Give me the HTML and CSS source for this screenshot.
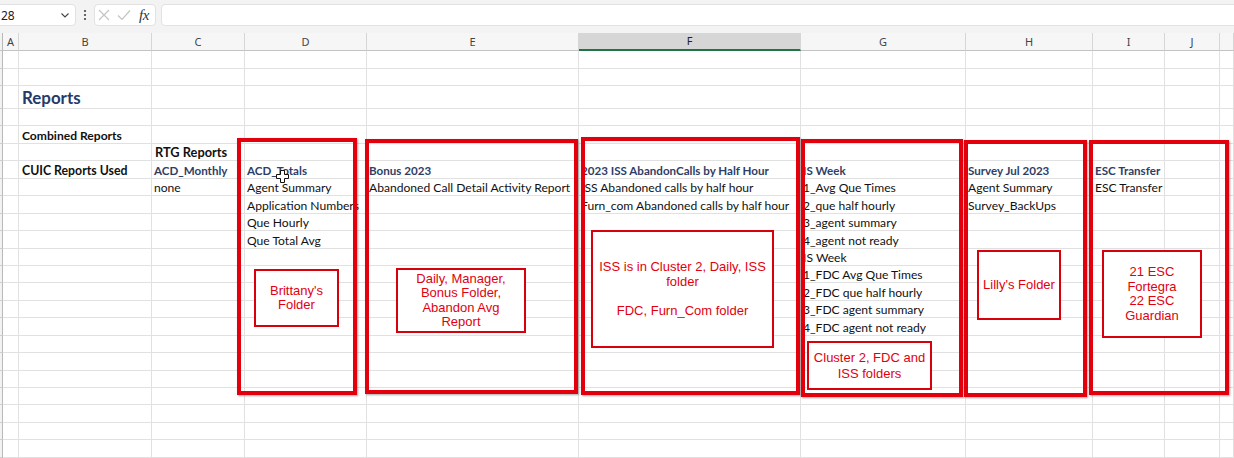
FILE: index.html
```html
<!DOCTYPE html>
<html>
<head>
<meta charset="utf-8">
<link rel="stylesheet" href="styles.css">
</head>
<body>
<div class="app">
  <div class="fbar">
    <div class="namebox"><span>28</span><svg class="chev" width="8" height="5" viewBox="0 0 8 5"><polyline points="0.5,0.5 4,4 7.5,0.5" fill="none" stroke="#444" stroke-width="1.1"/></svg></div>
    <svg class="dots" width="4" height="12" viewBox="0 0 4 12"><circle cx="2" cy="2" r="1.1" fill="#444"/><circle cx="2" cy="6" r="1.1" fill="#444"/><circle cx="2" cy="10" r="1.1" fill="#444"/></svg>
    <div class="fxbox">
      <svg class="ico" width="12" height="12" viewBox="0 0 12 12"><path d="M1 1 L11 11 M11 1 L1 11" stroke="#c4c4c4" stroke-width="1.2" fill="none"/></svg>
      <svg class="ico" width="14" height="12" viewBox="0 0 14 12"><path d="M1 6.5 L5 10.5 L13 1.5" stroke="#c4c4c4" stroke-width="1.2" fill="none"/></svg>
      <span class="fx">fx</span>
    </div>
    <div class="finput"></div>
  </div>
  <div class="sheet">
    <div class="row hdr"><span class="rh"></span><span>A</span><span>B</span><span>C</span><span>D</span><span>E</span><span class="sel">F</span><span>G</span><span>H</span><span>I</span><span>J</span><span></span></div>
    <div class="row top"><span class="rh"></span><span></span><span></span><span></span><span></span><span></span><span></span><span></span><span></span><span></span><span></span><span></span></div>
    <div class="row top"><span class="rh"></span><span></span><span></span><span></span><span></span><span></span><span></span><span></span><span></span><span></span><span></span><span></span></div>
    <div class="row tall"><span class="rh"></span><span></span><span class="title">Reports</span><span></span><span></span><span></span><span></span><span></span><span></span><span></span><span></span><span></span></div>
    <div class="row"><span class="rh"></span><span></span><span></span><span></span><span></span><span></span><span></span><span></span><span></span><span></span><span></span><span></span></div>
    <div class="row"><span class="rh"></span><span></span><span class="bold">Combined Reports</span><span></span><span></span><span></span><span></span><span></span><span></span><span></span><span></span><span></span></div>
    <div class="row"><span class="rh"></span><span></span><span></span><span class="bold lg">RTG Reports</span><span></span><span></span><span></span><span></span><span></span><span></span><span></span><span></span></div>
    <div class="row"><span class="rh"></span><span></span><span class="bold lg2">CUIC Reports Used</span><span class="hd">ACD_Monthly</span><span class="hd">ACD_Totals</span><span class="hd">Bonus 2023</span><span class="hd">2023 ISS AbandonCalls by Half Hour</span><span class="hd">IS Week</span><span class="hd">Survey Jul 2023</span><span class="hd">ESC Transfer</span><span></span><span></span></div>
    <div class="row"><span class="rh"></span><span></span><span></span><span>none</span><span>Agent Summary</span><span>Abandoned Call Detail Activity Report</span><span>ISS Abandoned calls by half hour</span><span>1_Avg Que Times</span><span>Agent Summary</span><span>ESC Transfer</span><span></span><span></span></div>
    <div class="row"><span class="rh"></span><span></span><span></span><span></span><span>Application Numbers</span><span></span><span>Furn_com Abandoned calls by half hour</span><span>2_que half hourly</span><span>Survey_BackUps</span><span></span><span></span><span></span></div>
    <div class="row"><span class="rh"></span><span></span><span></span><span></span><span>Que Hourly</span><span></span><span></span><span>3_agent summary</span><span></span><span></span><span></span><span></span></div>
    <div class="row"><span class="rh"></span><span></span><span></span><span></span><span>Que Total Avg</span><span></span><span></span><span>4_agent not ready</span><span></span><span></span><span></span><span></span></div>
    <div class="row"><span class="rh"></span><span></span><span></span><span></span><span></span><span></span><span></span><span>IS Week</span><span></span><span></span><span></span><span></span></div>
    <div class="row"><span class="rh"></span><span></span><span></span><span></span><span></span><span></span><span></span><span>1_FDC Avg Que Times</span><span></span><span></span><span></span><span></span></div>
    <div class="row"><span class="rh"></span><span></span><span></span><span></span><span></span><span></span><span></span><span>2_FDC que half hourly</span><span></span><span></span><span></span><span></span></div>
    <div class="row"><span class="rh"></span><span></span><span></span><span></span><span></span><span></span><span></span><span>3_FDC agent summary</span><span></span><span></span><span></span><span></span></div>
    <div class="row"><span class="rh"></span><span></span><span></span><span></span><span></span><span></span><span></span><span>4_FDC agent not ready</span><span></span><span></span><span></span><span></span></div>
    <div class="row"><span class="rh"></span><span></span><span></span><span></span><span></span><span></span><span></span><span></span><span></span><span></span><span></span><span></span></div>
    <div class="row"><span class="rh"></span><span></span><span></span><span></span><span></span><span></span><span></span><span></span><span></span><span></span><span></span><span></span></div>
    <div class="row"><span class="rh"></span><span></span><span></span><span></span><span></span><span></span><span></span><span></span><span></span><span></span><span></span><span></span></div>
    <div class="row"><span class="rh"></span><span></span><span></span><span></span><span></span><span></span><span></span><span></span><span></span><span></span><span></span><span></span></div>
    <div class="row"><span class="rh"></span><span></span><span></span><span></span><span></span><span></span><span></span><span></span><span></span><span></span><span></span><span></span></div>
    <div class="row"><span class="rh"></span><span></span><span></span><span></span><span></span><span></span><span></span><span></span><span></span><span></span><span></span><span></span></div>
    <div class="row"><span class="rh"></span><span></span><span></span><span></span><span></span><span></span><span></span><span></span><span></span><span></span><span></span><span></span></div>
    <div class="row"><span class="rh"></span><span></span><span></span><span></span><span></span><span></span><span></span><span></span><span></span><span></span><span></span><span></span></div>

    <div class="frame f-d"></div>
    <div class="frame f-e"></div>
    <div class="frame f-f"></div>
    <div class="frame f-g"></div>
    <div class="frame f-h"></div>
    <div class="frame f-i"></div>

    <div class="note n-a">Brittany's<br>Folder</div>
    <div class="note n-b">Daily, Manager,<br>Bonus Folder,<br>Abandon Avg<br>Report</div>
    <div class="note n-c">ISS is in Cluster 2, Daily, ISS<br>folder<br><br>FDC, Furn_Com folder</div>
    <div class="note n-d">Cluster 2, FDC and<br>ISS folders</div>
    <div class="note n-e">Lilly's Folder</div>
    <div class="note n-f">21 ESC<br>Fortegra<br>22 ESC<br>Guardian</div>

    <svg class="cursor" width="13" height="13" viewBox="0 0 13 13"><path d="M4.5 0.5 H8.5 V4.5 H12.5 V8.5 H8.5 V12.5 H4.5 V8.5 H0.5 V4.5 H4.5 Z" fill="#fff" stroke="#111" stroke-width="1"/></svg>
  </div>
</div>
</body>
</html>
```

FILE: styles.css
```css
html, body {
  margin: 0;
  padding: 0;
  background: #ffffff;
}

.app {
  width: 1234px;
  height: 458px;
  overflow: hidden;
  position: relative;
  font-family: Lato, "Noto Sans", sans-serif;
  background: #ffffff;
}

/* formula bar */
.fbar {
  height: 33px;
  box-sizing: border-box;
  padding-top: 4px;
  background: #f3f3f3;
  display: flex;
  align-items: flex-start;
}

.namebox {
  margin-left: -7px;
  width: 83px;
  height: 22px;
  box-sizing: border-box;
  background: #fff;
  border: 1px solid #e2e2e2;
  border-radius: 4px;
  display: flex;
  align-items: center;
  justify-content: space-between;
  padding: 0 6px 0 7px;
  font-family: "Noto Sans", sans-serif;
  font-size: 12px;
  color: #222;
}

.chev {
  display: block;
}

.dots {
  display: block;
  margin: 5px 0 0 7px;
}

.fxbox {
  margin-left: 7px;
  width: 62px;
  height: 22px;
  box-sizing: border-box;
  background: #fff;
  border: 1px solid #e2e2e2;
  border-radius: 4px;
  display: flex;
  align-items: center;
  padding-left: 3px;
  gap: 7px;
}

.ico {
  display: block;
}

.fx {
  font-family: "Liberation Serif", serif;
  font-style: italic;
  font-size: 15px;
  color: #333;
  margin-left: 1px;
  letter-spacing: -0.5px;
}

.finput {
  margin-left: 5px;
  flex: 1;
  height: 22px;
  box-sizing: border-box;
  background: #fff;
  border: 1px solid #e2e2e2;
  border-radius: 4px;
  margin-right: -6px;
}

/* sheet grid */
.sheet {
  position: relative;
}

.row {
  display: grid;
  grid-template-columns: 3px 16px 133px 93px 122px 212px 222px 165px 127px 72px 55px 1fr;
  height: 17.45px;
}

.row > span {
  box-sizing: border-box;
  border-right: 1px solid #e1e1e1;
  border-bottom: 1px solid #e1e1e1;
  display: flex;
  align-items: flex-end;
  padding: 0 0 0 2px;
  white-space: nowrap;
  overflow: visible;
  font-size: 12.1px;
  line-height: 15px;
  color: #111;
  min-width: 0;
}

.row > span.rh {
  background: #f2f2f2;
  border-right: 1px solid #b9b9b9;
  border-bottom: 1px solid #cfcfcf;
  padding: 0;
}

.row.top {
  height: 17.5px;
}

.row.tall {
  height: 23px;
}

.row.hdr {
  height: 18px;
}

.row.hdr > span {
  background: #f6f6f6;
  border-right: 1px solid #d6d6d6;
  border-bottom: 1px solid #c3c3c3;
  justify-content: center;
  align-items: center;
  padding: 0;
  font-family: "Noto Sans", sans-serif;
  font-size: 11px;
  color: #444;
  line-height: 16px;
}

.row.hdr > span.rh {
  background: #f2f2f2;
  border-right: 1px solid #b9b9b9;
}

.row.hdr > span.sel {
  background: #d6d6d6;
  border-bottom: 2px solid #217346;
  color: #222;
}

.row > span.title {
  font-weight: 700;
  font-size: 16.9px;
  color: #243a69;
  line-height: 20px;
  padding-left: 3px;
}

.row > span.bold {
  font-weight: 700;
  color: #111;
  padding-left: 3px;
}

.row > span.lg {
  font-size: 12.8px;
}

.row > span.lg2 {
  font-size: 12.3px;
}

.row > span.hd {
  font-weight: 700;
  font-size: 11.6px;
  color: #2f3d66;
}

/* floating shapes */
.frame {
  position: absolute;
  box-sizing: border-box;
  border: 4px solid #e3000c;
  box-shadow: 1px 1px 2px rgba(0, 0, 0, 0.35);
}

.f-d { left: 237px; top: 105px; width: 120px; height: 257px; }
.f-e { left: 365px; top: 106px; width: 213px; height: 255px; }
.f-f { left: 581px; top: 104px; width: 219px; height: 258px; }
.f-g { left: 801px; top: 106px; width: 162px; height: 258px; }
.f-h { left: 964px; top: 107px; width: 123px; height: 257px; }
.f-i { left: 1089px; top: 107px; width: 140px; height: 255px; }

.note {
  position: absolute;
  box-sizing: border-box;
  border: 2px solid #d8000a;
  background: #fff;
  display: flex;
  align-items: center;
  justify-content: center;
  text-align: center;
  font-family: "Liberation Sans", Arial, sans-serif;
  font-size: 13px;
  line-height: 14.5px;
  color: #e2000e;
}

.n-a { left: 254px; top: 236px; width: 85px; height: 58px; }
.n-b { left: 396px; top: 235px; width: 130px; height: 65px; }
.n-c { left: 591px; top: 197px; width: 183px; height: 118px; }
.n-d { left: 807px; top: 308px; width: 125px; height: 49px; line-height: 15.5px; }
.n-e { left: 977px; top: 217px; width: 84px; height: 70px; }
.n-f { left: 1102px; top: 217px; width: 100px; height: 88px; }

.cursor {
  position: absolute;
  left: 276px;
  top: 137px;
}
```
